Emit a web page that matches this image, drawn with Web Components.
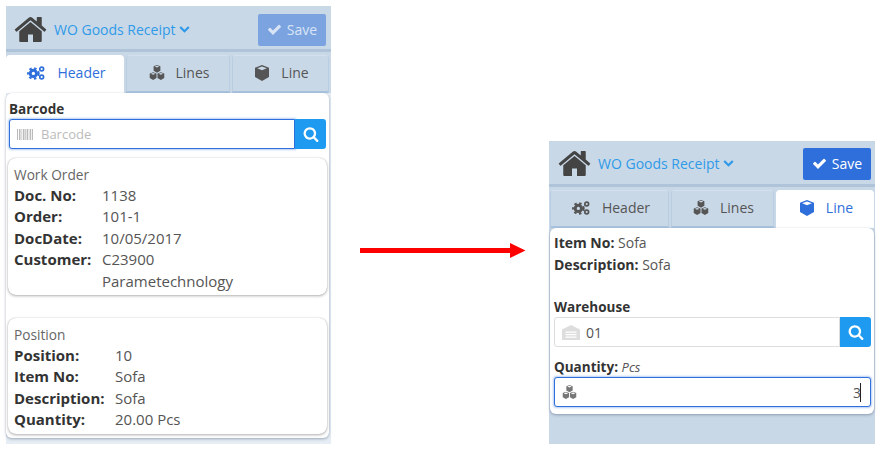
<!DOCTYPE html>
<html>
<head>
<meta charset="utf-8">
<title>WO Goods Receipt</title>
<style>
  body { margin: 0; background: #fff; font-family: 'Open Sans', 'Noto Sans', sans-serif; color: #333; }
  .stage { display: flex; align-items: flex-start; width: 882px; height: 455px; overflow: hidden; }
  #before {
    margin: 6px 0 0 6px;
    --tab-cols: 118px 104px 97px; --tab-pad: 0;
    --head-pad: 4px 5px 0 7px;
    --content-margin: 0 2px 0 0;
    --panel-bg: linear-gradient(#c9d8e7 0 87px, #e6edf4 87px);
  }
  #after {
    margin: 141px 0 0 0;
    --tab-cols: 119px 103px 98px; --tab-pad: 1px;
    --head-pad: 2px 4px 0 8px;
    --content-margin: 0 1px;
    --panel-bg: #c9d8e7;
  }
  wo-arrow { margin: 243px 23px 0 29px; }
</style>
</head>
<body>
<div class="stage">
  <wo-panel id="before" style="width:325px;height:438px" content-height="345">
    <wo-header slot="header" title="WO Goods Receipt" faded></wo-header>
    <wo-tabs slot="tabs" active="0"></wo-tabs>
    <wo-field label="Barcode" icon="barcode" placeholder="Barcode" focused search
      style="margin: 7px 3px 0 3px"></wo-field>
    <wo-card heading="Work Order" col="88" style="margin: 9px 2px 0 2px">
      <wo-row label="Doc. No:">1138</wo-row>
      <wo-row label="Order:">101-1</wo-row>
      <wo-row label="DocDate:">10/05/2017</wo-row>
      <wo-row label="Customer:">C23900<br>Parametechnology</wo-row>
    </wo-card>
    <wo-card heading="Position" col="101" style="margin: 23px 2px 0 2px">
      <wo-row label="Position:">10</wo-row>
      <wo-row label="Item No:">Sofa</wo-row>
      <wo-row label="Description:">Sofa</wo-row>
      <wo-row label="Quantity:">20.00 Pcs</wo-row>
    </wo-card>
  </wo-panel>

  <wo-arrow></wo-arrow>

  <wo-panel id="after" style="width:326px;height:303px" content-height="186">
    <wo-header slot="header" title="WO Goods Receipt"></wo-header>
    <wo-tabs slot="tabs" active="2"></wo-tabs>
    <wo-line label="Item No:" style="margin: 4px 0 0 4px">Sofa</wo-line>
    <wo-line label="Description:" style="margin: 0 0 0 4px">Sofa</wo-line>
    <wo-field label="Warehouse" icon="warehouse" value="01" search
      style="margin: 23px 3px 0 4px"></wo-field>
    <wo-field label="Quantity:" unit="Pcs" icon="cubes" value="3" focused caret
      style="margin: 11px 3px 0 4px"></wo-field>
  </wo-panel>
</div>

<script>
// one cube on a 16 wide grid, top face left open so the background shows through
const cubeShape = `
  <path fill-rule="evenodd" d="M8 0l7 2.800V12l-7 4-7-4V2.800zM8 1.400L3.200 3.300 8 5.300l4.800-2z"/>`;

const icons = {
  home: '<svg viewBox="0 0 1792 1792"><path d="M1472 992v480q0 26-19 45t-45 19h-384v-384h-256v384h-384q-26 0-45-19t-19-45v-480q0-1 .5-3t.5-3l575-474 575 474q1 2 1 6zm223-69l-62 74q-8 9-21 11h-3q-13 0-21-7l-692-577-692 577q-12 8-24 7-13-2-21-11l-62-74q-8-10-7-23.500t11-21.500l719-599q32-26 76-26t76 26l244 204v-195q0-14 9-23t23-9h192q14 0 23 9t9 23v408l219 182q10 8 11 21.500t-7 23.500z"/></svg>',
  check: '<svg viewBox="0 0 1792 1792"><path d="M1671 566q0 40-28 68l-724 724-136 136q-28 28-68 28t-68-28l-136-136-362-362q-28-28-28-68t28-68l136-136q28-28 68-28t68 28l294 295 656-657q28-28 68-28t68 28l136 136q28 28 28 68z"/></svg>',
  search: '<svg viewBox="0 0 1792 1792"><path d="M1216 832q0-185-131.500-316.500t-316.500-131.500-316.500 131.500-131.500 316.500 131.500 316.500 316.500 131.500 316.500-131.500 131.500-316.500zm512 832q0 52-38 90t-90 38q-54 0-90-38l-343-342q-179 124-399 124-143 0-273.500-55.500t-225-150-150-225-55.500-273.500 55.500-273.500 150-225 225-150 273.500-55.500 273.500 55.500 225 150 150 225 55.500 273.500q0 220-124 399l343 343q37 37 37 90z"/></svg>',
  chevron: '<svg viewBox="0 0 1792 1792"><path d="M1683 808l-742 741q-19 19-45 19t-45-19l-742-741q-19-19-19-45.500t19-45.500l166-165q19-19 45-19t45 19l531 531 531-531q19-19 45-19t45 19l166 165q19 19 19 45.500t-19 45.500z"/></svg>',
  cube: `<svg viewBox="0 0 16 16">${cubeShape}</svg>`,
  cubes: `<svg viewBox="0 0 32 31">
    <g transform="translate(8 0)">${cubeShape}</g>
    <g transform="translate(0 15)">${cubeShape}</g>
    <g transform="translate(16 15)">${cubeShape}</g></svg>`,
  cogs: `<svg viewBox="0 0 20 16">
    <circle cx="7" cy="8.500" r="3.600" fill="none" stroke="currentColor" stroke-width="3.400"/>
    <circle cx="7" cy="8.500" r="6" fill="none" stroke="currentColor" stroke-width="2.400" stroke-dasharray="2.800 2.900"/>
    <circle cx="16.500" cy="3.400" r="2.200" fill="none" stroke="currentColor" stroke-width="1.900"/>
    <circle cx="16.500" cy="12.600" r="2.200" fill="none" stroke="currentColor" stroke-width="1.900"/></svg>`,
  barcode: `<svg viewBox="0 0 16 11">
    <path d="M0 0h1v11H0zM2 0h1.500v11H2zM4.500 0h.7v11h-.7zM6 0h1.500v11H6zM8.200 0h.7v11h-.7zM9.600 0h1.400v11H9.600zM11.700 0h.7v11h-.7zM13 0h1.200v11H13zM15 0h1v11h-1z"/></svg>`,
  warehouse: `<svg viewBox="0 0 18 15">
    <path fill-rule="evenodd" d="M0 4.500 9 0l9 4.500V15H0zM3.500 6.500v1.200h11V6.500zM3.500 9v1.200h11V9zM3.500 11.500v1.200h11v-1.200z"/></svg>`
};

class WoIcon extends HTMLElement {
  constructor() {
    super();
    const shadow = this.attachShadow({ mode: 'open' });
    shadow.innerHTML = `<style>
      :host { display: inline-flex; line-height: 0; }
      svg { width: 100%; height: 100%; fill: currentColor; display: block; }
    </style>${icons[this.getAttribute('name')]}`;
  }
}
customElements.define('wo-icon', WoIcon);

class WoArrow extends HTMLElement {
  constructor() {
    super();
    const shadow = this.attachShadow({ mode: 'open' });
    shadow.innerHTML = `<style>
      :host { display: block; width: 166px; height: 15px; line-height: 0; }
    </style>
    <svg width="166" height="15" viewBox="0 0 166 15"><path fill="#f00" d="M0 5h150V0l15.500 7.500-15.500 7.500v-5H0z"/></svg>`;
  }
}
customElements.define('wo-arrow', WoArrow);

class WoPanel extends HTMLElement {
  constructor() {
    super();
    const shadow = this.attachShadow({ mode: 'open' });
    shadow.innerHTML = `<style>
      :host { display: flex; flex-direction: column; flex: none; background: var(--panel-bg); }
      .content {
        background: #fff;
        border-radius: 6px;
        box-shadow: 0 1px 3px rgba(60, 80, 110, .45);
        height: ${this.getAttribute('content-height')}px;
        margin: var(--content-margin);
        display: flow-root;
      }
    </style>
    <slot name="header"></slot>
    <slot name="tabs"></slot>
    <div class="content"><slot></slot></div>`;
  }
}
customElements.define('wo-panel', WoPanel);

class WoHeader extends HTMLElement {
  constructor() {
    super();
    const shadow = this.attachShadow({ mode: 'open' });
    const faded = this.hasAttribute('faded');
    shadow.innerHTML = `<style>
      :host {
        display: flex; align-items: center; height: 46px; box-sizing: border-box;
        padding: var(--head-pad); border-bottom: 3px solid #afc4d9;
      }
      .home { width: 35px; height: 35px; color: #444; }
      .title { margin-left: 6px; color: #2f9ae8; font-size: 14px; display: flex; align-items: center; gap: 3px; white-space: nowrap; }
      .title wo-icon { width: 11px; height: 11px; margin-top: -2px; }
      .save {
        margin-left: auto; width: 68px; height: 32px; border-radius: 2px;
        background: ${faded ? '#7ba3e0' : '#2f6fdb'};
        color: ${faded ? '#d9e5f5' : '#fff'};
        font-size: 14px; display: flex; align-items: center; justify-content: center; gap: 5px;
      }
      .save wo-icon { width: 15px; height: 15px; }
    </style>
    <wo-icon class="home" name="home"></wo-icon>
    <div class="title">${this.getAttribute('title')}<wo-icon name="chevron"></wo-icon></div>
    <div class="save"><wo-icon name="check"></wo-icon>Save</div>`;
    this.removeAttribute('title');
  }
}
customElements.define('wo-header', WoHeader);

class WoTabs extends HTMLElement {
  constructor() {
    super();
    const shadow = this.attachShadow({ mode: 'open' });
    const active = Number(this.getAttribute('active'));
    const tabs = [['cogs', 'Header', 20, 14], ['cubes', 'Lines', 16, 15], ['cube', 'Line', 16, 16]];
    shadow.innerHTML = `<style>
      :host {
        display: grid; grid-template-columns: var(--tab-cols); gap: 2px;
        padding: 3px 0 0 var(--tab-pad); height: 41px; box-sizing: border-box;
      }
      .tab {
        display: flex; align-items: center; justify-content: center; gap: 11px;
        background: #c9d8e7; color: #555; font-size: 14px; padding: 0 0 2px 2px;
        border-radius: 4px 4px 0 0;
        border: 1px solid #b9cde2; border-top-color: #d4e0ec; border-bottom: 2px solid #aac4e0;
        box-sizing: border-box;
      }
      .tab.on { background: #fff; color: #2f6fdb; border-color: #fff; }
    </style>
    ${tabs.map((t, i) => `<div class="tab ${i === active ? 'on' : ''}">
      <wo-icon name="${t[0]}" style="width:${t[2]}px;height:${t[3]}px"></wo-icon>${t[1]}</div>`).join('')}`;
  }
}
customElements.define('wo-tabs', WoTabs);

class WoField extends HTMLElement {
  constructor() {
    super();
    const shadow = this.attachShadow({ mode: 'open' });
    const focused = this.hasAttribute('focused');
    const search = this.hasAttribute('search');
    const value = this.getAttribute('value');
    const placeholder = this.getAttribute('placeholder');
    const unit = this.getAttribute('unit');
    const caret = this.hasAttribute('caret');
    const iconName = this.getAttribute('icon');
    const sizes = { barcode: [16, 11, '#bbb'], warehouse: [18, 15, '#ddd'], cubes: [15, 14, '#777'] };
    const size = sizes[iconName];
    shadow.innerHTML = `<style>
      :host { display: block; }
      label { display: block; font-size: 13.500px; font-weight: 700; color: #333; line-height: 18px; }
      label em { font-weight: 400; font-size: 13px; color: #555; }
      .row { display: flex; height: 30px; margin-top: 1px; }
      .box {
        flex: 1; display: flex; align-items: center; box-sizing: border-box; padding-left: 7px;
        border: 1px solid #ddd; border-radius: 3px 0 0 3px; font-size: 14px; color: #555; background: #fff;
      }
      .box.only { border-radius: 3px; }
      .box.focused { border: 1px solid #2f6fdb; box-shadow: 0 0 2px 1px rgba(47, 111, 219, .35); }
      .box wo-icon { flex: none; }
      .text { margin-left: 6px; }
      .text.ph { color: #bbb; margin-left: 8px; font-size: 13px; }
      .value-end { margin-left: auto; margin-right: 9px; position: relative; }
      .caret { position: absolute; right: 0; top: 0; bottom: 0; width: 1px; background: #222; }
      button {
        all: unset; width: 31px; flex: none; display: flex; align-items: center; justify-content: center;
        background: #1e9bf0; color: #fff; border-radius: 0 3px 3px 0;
      }
      button wo-icon { width: 16px; height: 16px; }
    </style>
    <label>${this.getAttribute('label')}${unit ? ` <em>${unit}</em>` : ''}</label>
    <div class="row">
      <div class="box ${focused ? 'focused' : ''} ${search ? '' : 'only'}">
        <wo-icon name="${iconName}" style="width:${size[0]}px;height:${size[1]}px;color:${size[2]}"></wo-icon>
        ${caret
          ? `<span class="value-end">${value}<span class="caret"></span></span>`
          : `<span class="text ${placeholder ? 'ph' : ''}">${placeholder || value}</span>`}
      </div>
      ${search ? '<button><wo-icon name="search"></wo-icon></button>' : ''}
    </div>`;
  }
}
customElements.define('wo-field', WoField);

class WoCard extends HTMLElement {
  constructor() {
    super();
    const shadow = this.attachShadow({ mode: 'open' });
    shadow.innerHTML = `<style>
      :host {
        display: block; padding: 7px 5px 3px 6px; border-radius: 8px;
        box-shadow: 0 1px 3px rgba(0, 0, 0, .3), 0 0 1px rgba(0, 0, 0, .25);
        --col: ${this.getAttribute('col')}px;
      }
      h4 { margin: 0; font-weight: 400; font-size: 13.700px; color: #666; line-height: 20px; }
    </style>
    <h4>${this.getAttribute('heading')}</h4>
    <slot></slot>`;
  }
}
customElements.define('wo-card', WoCard);

class WoRow extends HTMLElement {
  constructor() {
    super();
    const shadow = this.attachShadow({ mode: 'open' });
    shadow.innerHTML = `<style>
      :host { display: grid; grid-template-columns: var(--col) 1fr; font-size: 15px; line-height: 21.400px; color: #555; }
      b { color: #333; }
    </style>
    <b>${this.getAttribute('label')}</b><div><slot></slot></div>`;
  }
}
customElements.define('wo-row', WoRow);

class WoLine extends HTMLElement {
  constructor() {
    super();
    const shadow = this.attachShadow({ mode: 'open' });
    shadow.innerHTML = `<style>
      :host { display: block; font-size: 14px; line-height: 21.500px; color: #555; }
      b { color: #333; }
    </style>
    <b>${this.getAttribute('label')}</b> <slot></slot>`;
  }
}
customElements.define('wo-line', WoLine);
</script>
</body>
</html>
